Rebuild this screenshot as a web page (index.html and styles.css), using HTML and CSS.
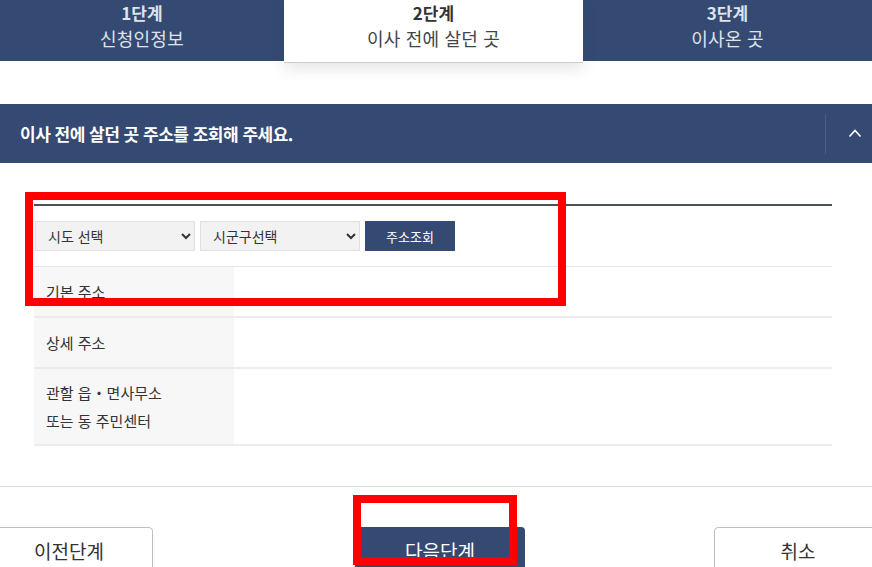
FILE: index.html
```html
<!DOCTYPE html>
<html lang="ko">
<head>
  <meta charset="UTF-8">
  <meta name="viewport" content="width=device-width, initial-scale=1.0">
  <title>전입신고 - 이사 전에 살던 곳</title>
  <link rel="stylesheet" href="styles.css">
</head>
<body>

  <!-- 단계 표시 -->
  <div class="steps">
    <div class="step step-1">
      <strong>1단계</strong>
      <span>신청인정보</span>
    </div>
    <div class="step step-2 active">
      <strong>2단계</strong>
      <span>이사 전에 살던 곳</span>
    </div>
    <div class="step step-3">
      <strong>3단계</strong>
      <span>이사온 곳</span>
    </div>
  </div>

  <div class="panel-head">
    <h2>이사 전에 살던 곳 주소를 조회해 주세요.</h2>
    <button class="toggle" type="button" aria-label="접기">
      <svg width="14" height="10" viewBox="0 0 14 10"><path d="M1.5 8.5 L7 2.5 L12.5 8.5" fill="none" stroke="#fff" stroke-width="1.6"/></svg>
    </button>
  </div>

  <div class="panel-body">
    <div class="search-row">
      <select class="sel sel-sido">
        <option>시도 선택</option>
      </select>
      <select class="sel sel-sigungu">
        <option>시군구선택</option>
      </select>
      <button class="btn-search" type="button">주소조회</button>
    </div>

    <table class="addr-table">
      <tr class="row-base">
        <th>기본 주소</th>
        <td></td>
      </tr>
      <tr class="row-detail">
        <th>상세 주소</th>
        <td></td>
      </tr>
      <tr class="row-office">
        <th>관할 읍・면사무소<br>또는 동 주민센터</th>
        <td></td>
      </tr>
    </table>
  </div>

  <div class="footer-btns">
    <button class="btn btn-prev" type="button">이전단계</button>
    <button class="btn btn-next" type="button">다음단계</button>
    <button class="btn btn-cancel" type="button">취소</button>
  </div>

  <!-- 표시용 빨간 박스 -->
  <div class="mark mark-search"></div>
  <div class="mark mark-next"></div>

</body>
</html>
```

FILE: styles.css
```css
html, body {
  margin: 0;
  padding: 0;
}
body {
  width: 872px;
  height: 567px;
  overflow: hidden;
  position: relative;
  background: #fff;
  color: #333;
  font-family: "Noto Sans CJK KR", "Noto Sans", sans-serif;
}

/* 단계 */
.steps {
  display: flex;
  height: 61px;
  background-color: #354a72;
}
.step {
  display: flex;
  flex-direction: column;
  align-items: center;
  color: #dfe3ea;
}
.step strong {
  font-size: 17px;
  line-height: 25px;
  margin-top: 0;
  font-weight: 700;
}
.step span {
  font-size: 18px;
  line-height: 26px;
  font-weight: 400;
  letter-spacing: 0.2px;
}
.step-1 { width: 284px; }
.step-2 { width: 299px; }
.step-3 { width: 289px; }
.step.active {
  position: relative;
  z-index: 1;
  height: 62px;
  background: #fff;
  color: #444;
  border-bottom: 1px solid #ccc;
  box-shadow: 0 6px 14px rgba(40, 50, 80, 0.12);
}
.step.active strong {
  color: #333;
}

/* 패널 헤더 */
.panel-head {
  display: flex;
  align-items: center;
  height: 59px;
  margin-top: 43px;
  background-color: #354a72;
}
.panel-head h2 {
  flex: 1;
  margin: 0;
  padding-left: 20px;
  font-size: 17px;
  font-weight: 700;
  color: #fff;
  letter-spacing: -0.5px;
}
.toggle {
  width: 47px;
  height: 40px;
  border: none;
  border-left: 1px solid #4a5e83;
  background: transparent;
  padding: 0 0 0 12px;
  cursor: pointer;
}

/* 패널 본문 */
.panel-body {
  margin: 41px 40px 0 34px;
  border-top: 2px solid #4a4f58;
}
.search-row {
  display: flex;
  align-items: center;
  height: 60px;
  padding-left: 1px;
  border-bottom: 1px solid #e6e6e6;
}
.sel {
  height: 30px;
  margin-right: 5px;
  padding: 0 8px;
  border: 1px solid #e0e0e0;
  background: #f2f2f2;
  font-family: inherit;
  font-size: 14px;
  color: #333;
}
.sel-sido { width: 160px; }
.sel-sigungu { width: 160px; }
.btn-search {
  width: 90px;
  height: 30px;
  border: none;
  background-color: #354a72;
  color: #fff;
  font-family: inherit;
  font-size: 13px;
  cursor: pointer;
}

.addr-table {
  width: 100%;
  border-collapse: collapse;
}
.addr-table th,
.addr-table td {
  border-bottom: 2px solid #ececec;
  padding: 0;
}
.addr-table th {
  width: 200px;
  padding-left: 12px;
  background: #f7f7f7;
  text-align: left;
  font-size: 15px;
  font-weight: 400;
  color: #333;
  box-sizing: border-box;
}
.row-base th,
.row-base td { height: 49px; }
.row-detail th,
.row-detail td { height: 49px; }
.row-office th,
.row-office td { height: 75px; }
.row-office th {
  line-height: 28px;
  padding-top: 0;
}

/* 하단 버튼 */
.footer-btns {
  display: flex;
  height: 80px;
  margin-top: 40px;
  border-top: 1px solid #d9d9d9;
}
.btn {
  flex-shrink: 0;
  height: 46px;
  margin-top: 40px;
  padding: 0;
  border-radius: 4px;
  font-family: inherit;
  font-size: 19px;
  cursor: pointer;
}
.btn-prev {
  width: 168px;
  margin-left: -15px;
  border: 1px solid #bfbfbf;
  background: #fff;
  color: #333;
}
.btn-next {
  width: 170px;
  margin-left: 202px;
  border: none;
  background-color: #354a72;
  color: #fff;
}
.btn-cancel {
  width: 168px;
  margin-left: 189px;
  border: 1px solid #bfbfbf;
  background: #fff;
  color: #333;
}

/* 빨간 표시 박스 */
.mark {
  position: absolute;
  border: 8px solid #ff0000;
  box-sizing: border-box;
}
.mark-search {
  left: 25px;
  top: 192px;
  width: 541px;
  height: 114px;
}
.mark-next {
  left: 353px;
  top: 495px;
  width: 164px;
  height: 70px;
}
```
